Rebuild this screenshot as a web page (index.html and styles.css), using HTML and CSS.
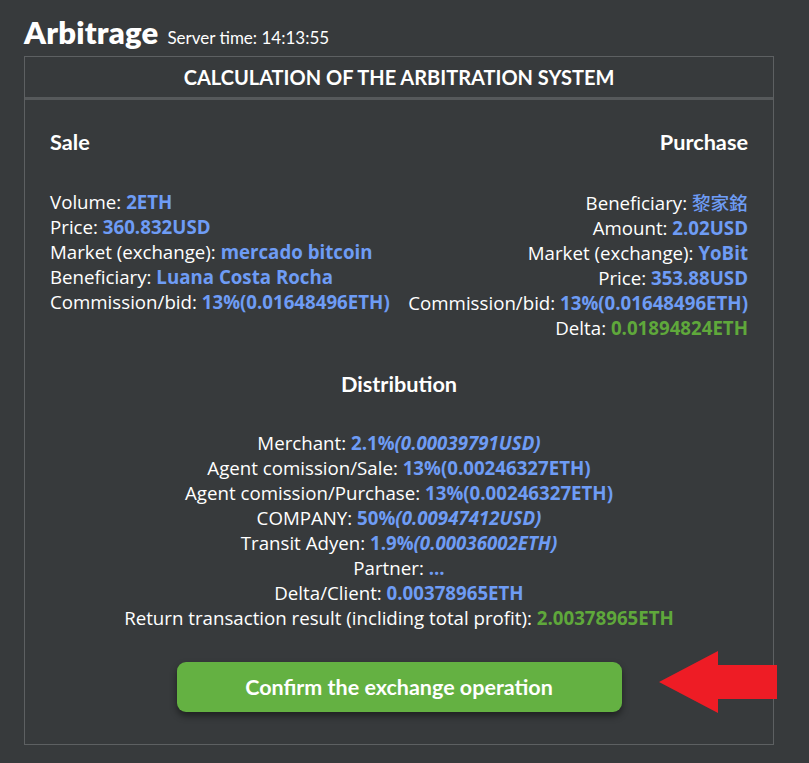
FILE: index.html
```html
<!DOCTYPE html>
<html lang="en">
<head>
<meta charset="utf-8">
<title>Arbitrage</title>
<link rel="stylesheet" href="styles.css">
</head>
<body>
<div class="page">
  <header class="top">
    <h1 class="title">Arbitrage</h1>
    <span class="server-time">Server time: 14:13:55</span>
  </header>
  <section class="panel">
    <div class="panel-head">CALCULATION OF THE ARBITRATION SYSTEM</div>
    <div class="panel-body">
      <div class="sides">
        <div class="side side-sale">
          <h2 class="side-title">Sale</h2>
          <ul class="rows">
            <li>Volume: <b class="v">2ETH</b></li>
            <li>Price: <b class="v">360.832USD</b></li>
            <li>Market (exchange): <b class="v">mercado bitcoin</b></li>
            <li>Beneficiary: <b class="v">Luana Costa Rocha</b></li>
            <li>Commission/bid: <b class="v">13%(0.01648496ETH)</b></li>
          </ul>
        </div>
        <div class="side side-purchase">
          <h2 class="side-title">Purchase</h2>
          <ul class="rows">
            <li>Beneficiary: <b class="v cjk">黎家銘</b></li>
            <li>Amount: <b class="v">2.02USD</b></li>
            <li>Market (exchange): <b class="v">YoBit</b></li>
            <li>Price: <b class="v">353.88USD</b></li>
            <li>Commission/bid: <b class="v">13%(0.01648496ETH)</b></li>
            <li>Delta: <b class="v g">0.01894824ETH</b></li>
          </ul>
        </div>
      </div>
      <div class="dist">
        <h2 class="side-title">Distribution</h2>
        <ul class="rows">
          <li>Merchant: <b class="v">2.1%<i>(0.00039791USD)</i></b></li>
          <li>Agent comission/Sale: <b class="v">13%(0.00246327ETH)</b></li>
          <li>Agent comission/Purchase: <b class="v">13%(0.00246327ETH)</b></li>
          <li>COMPANY: <b class="v">50%<i>(0.00947412USD)</i></b></li>
          <li>Transit Adyen: <b class="v">1.9%<i>(0.00036002ETH)</i></b></li>
          <li>Partner: <b class="v">...</b></li>
          <li>Delta/Client: <b class="v">0.00378965ETH</b></li>
          <li>Return transaction result (incliding total profit): <b class="v g">2.00378965ETH</b></li>
        </ul>
      </div>
      <div class="actions">
        <button class="confirm" type="button">Confirm the exchange operation</button>
        <svg class="arrow" width="120" height="64" viewBox="0 0 120 64" aria-hidden="true">
          <polygon points="1,31 60,0 60,14 119,14 119,48 60,48 60,62" fill="#ee1c25"/>
        </svg>
      </div>
    </div>
  </section>
</div>
</body>
</html>
```

FILE: styles.css
```css
* { box-sizing: border-box; }
html, body { margin: 0; padding: 0; }
body {
  background: #373a3c;
  color: #ffffff;
  font-family: "Open Sans", "Noto Sans", sans-serif;
  width: 809px;
  height: 763px;
  overflow: hidden;
}
.page {
  padding: 14px 36px 0 24px;
}
.top {
  display: flex;
  align-items: baseline;
  gap: 9px;
  height: 42px;
}
.title {
  margin: 0;
  font-family: "Lato", sans-serif;
  font-weight: 800;
  font-size: 31px;
  line-height: 36px;
  letter-spacing: 0.2px;
}
.server-time {
  font-family: "Lato", sans-serif;
  font-size: 17px;
}
.panel {
  border: 1px solid #5d6062;
  width: 750px;
  height: 689px;
}
.panel-head {
  height: 43px;
  border-bottom: 3px solid #56595b;
  text-align: center;
  font-family: "Lato", sans-serif;
  font-weight: 700;
  font-size: 20px;
  line-height: 40px;
}
.panel-body {
  padding: 30px 25px 0 25px;
}
.sides {
  display: flex;
  justify-content: space-between;
}
.side-purchase { text-align: right; }
.side-title {
  margin: 0 0 34px;
  font-family: "Lato", sans-serif;
  font-size: 21.7px;
  font-weight: 700;
  line-height: 25px;
}
.rows {
  list-style: none;
  margin: 0;
  padding: 0;
  font-size: 18.7px;
  line-height: 25px;
}
.v {
  color: #6e9cf5;
  font-weight: 700;
}
.v i { font-style: italic; }
.v.g { color: #5fa83b; }
.cjk { font-family: "Noto Sans CJK TC", "Noto Sans CJK SC", sans-serif; font-weight: 500; }
.dist {
  margin-top: 32px;
  text-align: center;
}
.dist .side-title { margin-bottom: 33px; }
.actions {
  position: relative;
  display: flex;
  justify-content: center;
  margin-top: 32px;
}
.confirm {
  width: 445px;
  height: 50px;
  border: none;
  border-radius: 9px;
  background: #64b142;
  color: #ffffff;
  font-family: "Lato", sans-serif;
  font-weight: 700;
  font-size: 21.5px;
  box-shadow: 0 4px 7px rgba(0, 0, 0, 0.45);
}
.arrow {
  position: absolute;
  left: 608px;
  top: -11px;
}
```
